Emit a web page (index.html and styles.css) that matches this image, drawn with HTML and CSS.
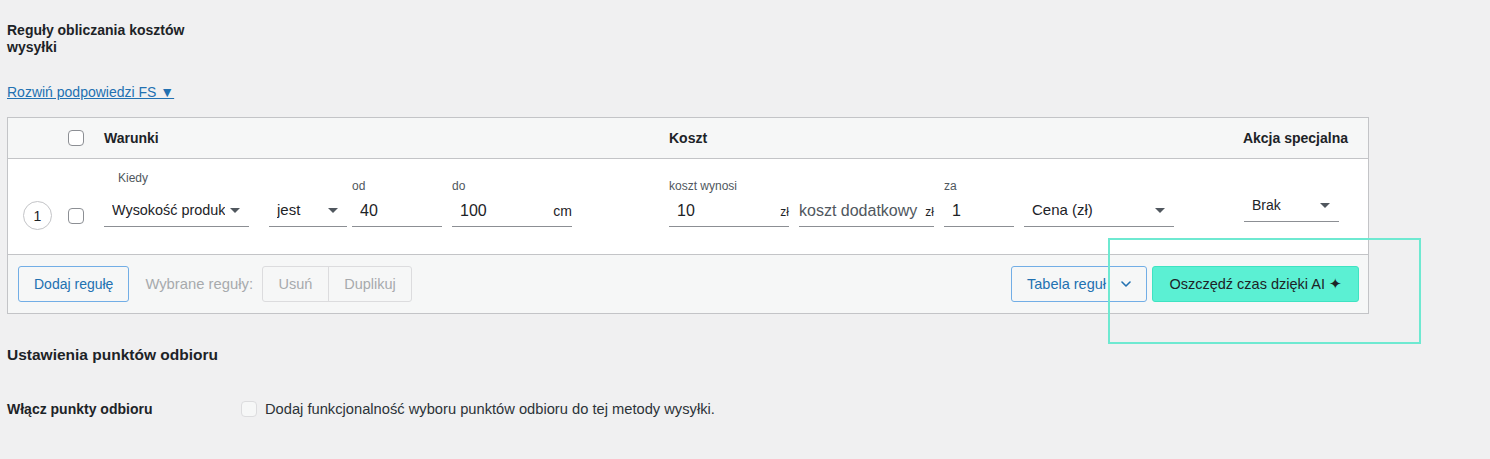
FILE: index.html
```html
<!DOCTYPE html>
<html lang="pl">
<head>
<meta charset="utf-8">
<title>Reguły obliczania kosztów wysyłki</title>
<link rel="stylesheet" href="styles.css">
</head>
<body>
<div class="page">
  <div class="section-title">Reguły obliczania kosztów wysyłki</div>
  <a class="hints-link" href="#">Rozwiń podpowiedzi FS ▼</a>

  <div class="rules-table">
    <div class="rules-head">
      <span class="checkbox head-check"></span>
      <span class="col-conditions">Warunki</span>
      <span class="col-cost">Koszt</span>
      <span class="col-action">Akcja specjalna</span>
    </div>

    <div class="rules-row">
      <span class="row-num">1</span>
      <span class="checkbox row-check"></span>

      <div class="field f-when">
        <div class="field-label label-when">Kiedy</div>
        <div class="control select"><span class="value when-value">Wysokość produk</span><span class="arrow"></span></div>
      </div>
      <div class="field f-is">
        <div class="control select"><span class="value">jest</span><span class="arrow"></span></div>
      </div>
      <div class="field f-from">
        <div class="field-label">od</div>
        <div class="control input"><span class="value">40</span></div>
      </div>
      <div class="field f-to">
        <div class="field-label">do</div>
        <div class="control input"><span class="value">100</span><span class="suffix">cm</span></div>
      </div>
      <div class="field f-cost">
        <div class="field-label">koszt wynosi</div>
        <div class="control input"><span class="value">10</span><span class="suffix small">zł</span></div>
      </div>
      <div class="field f-extra">
        <div class="control input no-pad"><span class="value placeholder">koszt dodatkowy</span><span class="suffix small">zł</span></div>
      </div>
      <div class="field f-per">
        <div class="field-label">za</div>
        <div class="control input"><span class="value">1</span></div>
      </div>
      <div class="field f-price">
        <div class="control select"><span class="value">Cena (zł)</span><span class="arrow"></span></div>
      </div>
      <div class="field f-special">
        <div class="control select select-small"><span class="value">Brak</span><span class="arrow"></span></div>
      </div>
    </div>

    <div class="rules-foot">
      <button class="btn btn-outline">Dodaj regułę</button>
      <span class="selected-label">Wybrane reguły:</span>
      <div class="btn-group">
        <button class="btn-disabled">Usuń</button>
        <button class="btn-disabled">Duplikuj</button>
      </div>
      <div class="foot-right">
        <button class="btn btn-outline btn-table">Tabela reguł
          <svg class="chevron" width="10" height="6" viewBox="0 0 10 6"><polyline points="1,1 5,5 9,1" fill="none" stroke="#2271b1" stroke-width="1.6" stroke-linecap="round" stroke-linejoin="round"/></svg>
        </button>
        <button class="btn btn-ai">Oszczędź czas dzięki AI <span class="spark">✦</span></button>
      </div>
    </div>
  </div>

  <div class="pickup-title">Ustawienia punktów odbioru</div>
  <div class="pickup-row">
    <span class="pickup-label">Włącz punkty odbioru</span>
    <span class="checkbox disabled"></span>
    <span class="pickup-desc">Dodaj funkcjonalność wyboru punktów odbioru do tej metody wysyłki.</span>
  </div>
</div>
<div class="highlight"></div>
</body>
</html>
```
FILE: styles.css
```css
* { box-sizing: border-box; }

body {
  margin: 0;
  background: #f0f0f1;
  font-family: "Liberation Sans", Arial, sans-serif;
  color: #1d2327;
  position: relative;
  min-height: 459px;
}

.page {
  padding: 22px 0 0 7px;
}

.section-title {
  font-size: 14px;
  font-weight: bold;
  line-height: 17px;
  width: 190px;
}

.hints-link {
  display: inline-block;
  margin-top: 28px;
  font-size: 14px;
  line-height: 17px;
  color: #2271b1;
  text-decoration: underline;
}

.rules-table {
  margin-top: 16px;
  width: 1362px;
  border: 1px solid #c3c4c7;
  background: #f6f7f7;
}

.rules-head {
  display: flex;
  align-items: center;
  height: 41px;
  border-bottom: 1px solid #c3c4c7;
  font-size: 14px;
  font-weight: bold;
  padding-left: 60px;
  padding-right: 20px;
}

.checkbox {
  display: inline-block;
  width: 16px;
  height: 16px;
  border: 1px solid #8c8f94;
  border-radius: 4px;
  background: #fff;
  flex: none;
}

.col-conditions { margin-left: 20px; width: 565px; }
.col-cost { flex: 1; }

.rules-row {
  display: flex;
  align-items: flex-end;
  height: 96px;
  background: #fff;
  border-bottom: 1px solid #c3c4c7;
}

.row-num {
  width: 29px;
  height: 29px;
  border: 1px solid #c3c4c7;
  border-radius: 50%;
  margin-left: 15px;
  margin-bottom: 24px;
  display: flex;
  align-items: center;
  justify-content: center;
  font-size: 14px;
  flex: none;
}

.row-check {
  margin-left: 16px;
  margin-bottom: 30px;
}

.field {
  display: flex;
  flex-direction: column;
  margin-bottom: 27px;
  flex: none;
}

.field-label {
  font-size: 12px;
  line-height: 14px;
  color: #50575e;
  margin-bottom: 4px;
}

.label-when {
  margin-left: 14px;
  margin-bottom: 12px;
}

.control {
  display: flex;
  align-items: baseline;
  height: 30px;
  border-bottom: 1px solid #8c8f94;
  padding: 4px 8px 0 8px;
  font-size: 16px;
  line-height: 20px;
  color: #1d2327;
}

.control.select { font-size: 15px; align-items: center; padding-top: 0; padding-bottom: 3px; }

.control .value { flex: 1; white-space: nowrap; overflow: hidden; }
.control.select .value { margin-right: 4px; }
.control.select .when-value { font-size: 14.4px; margin-right: 5px; }

.control .arrow {
  width: 0;
  height: 0;
  border-left: 5px solid transparent;
  border-right: 5px solid transparent;
  border-top: 5px solid #50575e;
  flex: none;
  margin-right: 1px;
}

.control.no-pad { padding-left: 0; }

.placeholder { color: #50575e; }

.suffix { font-size: 14px; flex: none; margin-right: -8px; }
.suffix.small { font-size: 12px; }

.f-when { margin-left: 20px; width: 145px; }
.f-is { margin-left: 20px; width: 78px; }
.f-from { margin-left: 5px; width: 90px; }
.f-to { margin-left: 10px; width: 120px; }
.f-cost { margin-left: 97px; width: 120px; }
.f-extra { margin-left: 10px; width: 135px; }
.f-per { margin-left: 10px; width: 70px; }
.f-price { margin-left: 10px; width: 150px; }
.f-special { margin-left: 70px; width: 95px; margin-bottom: 32px; }

.control.select-small { font-size: 14px; }

.rules-foot {
  display: flex;
  align-items: center;
  height: 58px;
  padding-left: 10px;
  padding-right: 9px;
}

.btn {
  font-family: inherit;
  font-size: 14px;
  height: 36px;
  border-radius: 3px;
  padding: 0 15px;
  cursor: pointer;
}

.btn-outline {
  background: #f6f7f7;
  border: 1px solid #72aee6;
  color: #2271b1;
}

.selected-label {
  margin-left: 16px;
  font-size: 14.8px;
  color: #a7aaad;
}

.btn-group {
  display: flex;
  margin-left: 9px;
  height: 36px;
  border: 1px solid #dcdcde;
  border-radius: 3px;
}

.btn-disabled {
  font-family: inherit;
  font-size: 14.5px;
  background: transparent;
  border: none;
  color: #a7aaad;
  padding: 0;
}

.btn-disabled + .btn-disabled { border-left: 1px solid #dcdcde; }
.btn-disabled:first-child { width: 65px; }
.btn-disabled:last-child { width: 83px; }

.foot-right {
  margin-left: auto;
  display: flex;
  gap: 5px;
}

.btn-table {
  width: 136px;
  display: flex;
  align-items: center;
  justify-content: space-between;
  padding: 0 15px 0 15px;
  font-size: 14.5px;
}

.chevron { margin-left: 6px; flex: none; }

.btn-ai {
  width: 207px;
  background: #5bf0d3;
  border: 1px solid #3fe3c2;
  color: #1d2327;
  font-size: 14.5px;
  padding: 0;
}

.spark { font-family: "DejaVu Sans", sans-serif; font-size: 15px; color: #1d2327; }

.pickup-title {
  margin-top: 31px;
  font-size: 15.5px;
  font-weight: bold;
  line-height: 20px;
}

.pickup-row {
  display: flex;
  align-items: center;
  margin-top: 34px;
  height: 20px;
}

.pickup-label {
  width: 234px;
  font-size: 14px;
  font-weight: bold;
}

.checkbox.disabled {
  border-color: #dcdcde;
  background: #f6f7f7;
}

.pickup-desc {
  margin-left: 8px;
  font-size: 14.7px;
  color: #2c3338;
}

.highlight {
  position: absolute;
  left: 1108px;
  top: 238px;
  width: 313px;
  height: 106px;
  border: 2px solid #6ee9d1;
  pointer-events: none;
}
```
